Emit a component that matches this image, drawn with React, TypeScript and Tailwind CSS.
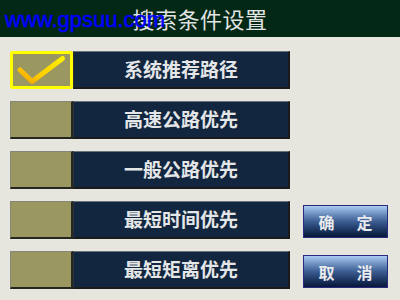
import React from "react";

const OPTIONS = ["系统推荐路径", "高速公路优先", "一般公路优先", "最短时间优先", "最短矩离优先"];

const CJK = { fontFamily: '"Noto Sans CJK SC", "Noto Sans", sans-serif' };

function CheckMark() {
  return (
    <svg width="63" height="38" viewBox="0 0 63 38" className="absolute left-[-3px] top-[-3px]">
      <defs>
        <linearGradient id="chk" x1="0" y1="1" x2="1" y2="0">
          <stop offset="0" stopColor="#f2a000" />
          <stop offset="0.35" stopColor="#ffcc00" />
          <stop offset="1" stopColor="#fff000" />
        </linearGradient>
      </defs>
      <path
        d="M10 19 L22 30.5 L52.5 7.5"
        fill="none"
        stroke="url(#chk)"
        strokeWidth="5"
        strokeLinecap="round"
        strokeLinejoin="round"
      />
    </svg>
  );
}

function OptionRow({ label, checked }: { label: string; checked: boolean }) {
  return (
    <div className="flex h-[38px]">
      {checked ? (
        <div className="relative w-[63px] h-full rounded-[2px] border-[3px] border-[#ffff00] bg-[#9a9860]">
          <CheckMark />
        </div>
      ) : (
        <div className="w-[63px] h-full border-t border-l border-[#85857a] border-b-2 border-r-2 border-b-[#262620] border-r-[#262620] bg-[#9a9860]" />
      )}
      <div
        className="w-[217px] h-full flex items-center justify-center border-t border-l border-t-[#6d737a] border-l-[#2a3038] border-b-2 border-r-2 border-b-[#1a1a1a] border-r-[#1a1a1a] bg-[#12263f] text-[19px] font-bold text-[#e4e6e8]"
        style={CJK}
      >
        {label}
      </div>
    </div>
  );
}

function BlueButton({ a, b }: { a: string; b: string }) {
  return (
    <button
      className="w-[85px] h-[33px] flex items-center justify-center gap-[22px] border border-[#2a2a80] bg-gradient-to-b from-[#a9cbf2] via-[#3c5d92] to-[#07183a] text-[16px] font-bold text-[#e8eaee]"
      style={CJK}
    >
      <span>{a}</span>
      <span>{b}</span>
    </button>
  );
}

export default function App() {
  return (
    <div className="w-[400px] h-[300px] bg-[#e6e5de] overflow-hidden flex flex-col">
      {/* Title bar */}
      <div className="relative h-[37px] bg-[#032816] flex items-center justify-center">
        <span className="text-[22px] text-[#e2e4e2] tracking-[0.5px]" style={CJK}>
          搜索条件设置
        </span>
        <span
          className="absolute left-[5px] top-[9px] text-[22px] leading-none font-medium text-[#0000ff] [-webkit-text-stroke:0.5px_#0000ff]"
          style={{ fontFamily: '"Liberation Sans", Arial, sans-serif' }}
        >
          www.gpsuu.com
        </span>
      </div>

      <div className="flex pl-[10px] pt-[14px]">
        <div className="flex flex-col gap-[12px]">
          {OPTIONS.map((o, i) => (
            <OptionRow key={o} label={o} checked={i === 0} />
          ))}
        </div>
        <div className="ml-[13px] flex flex-col justify-end gap-[17px] pb-[1px]">
          <BlueButton a="确" b="定" />
          <BlueButton a="取" b="消" />
        </div>
      </div>
    </div>
  );
}
